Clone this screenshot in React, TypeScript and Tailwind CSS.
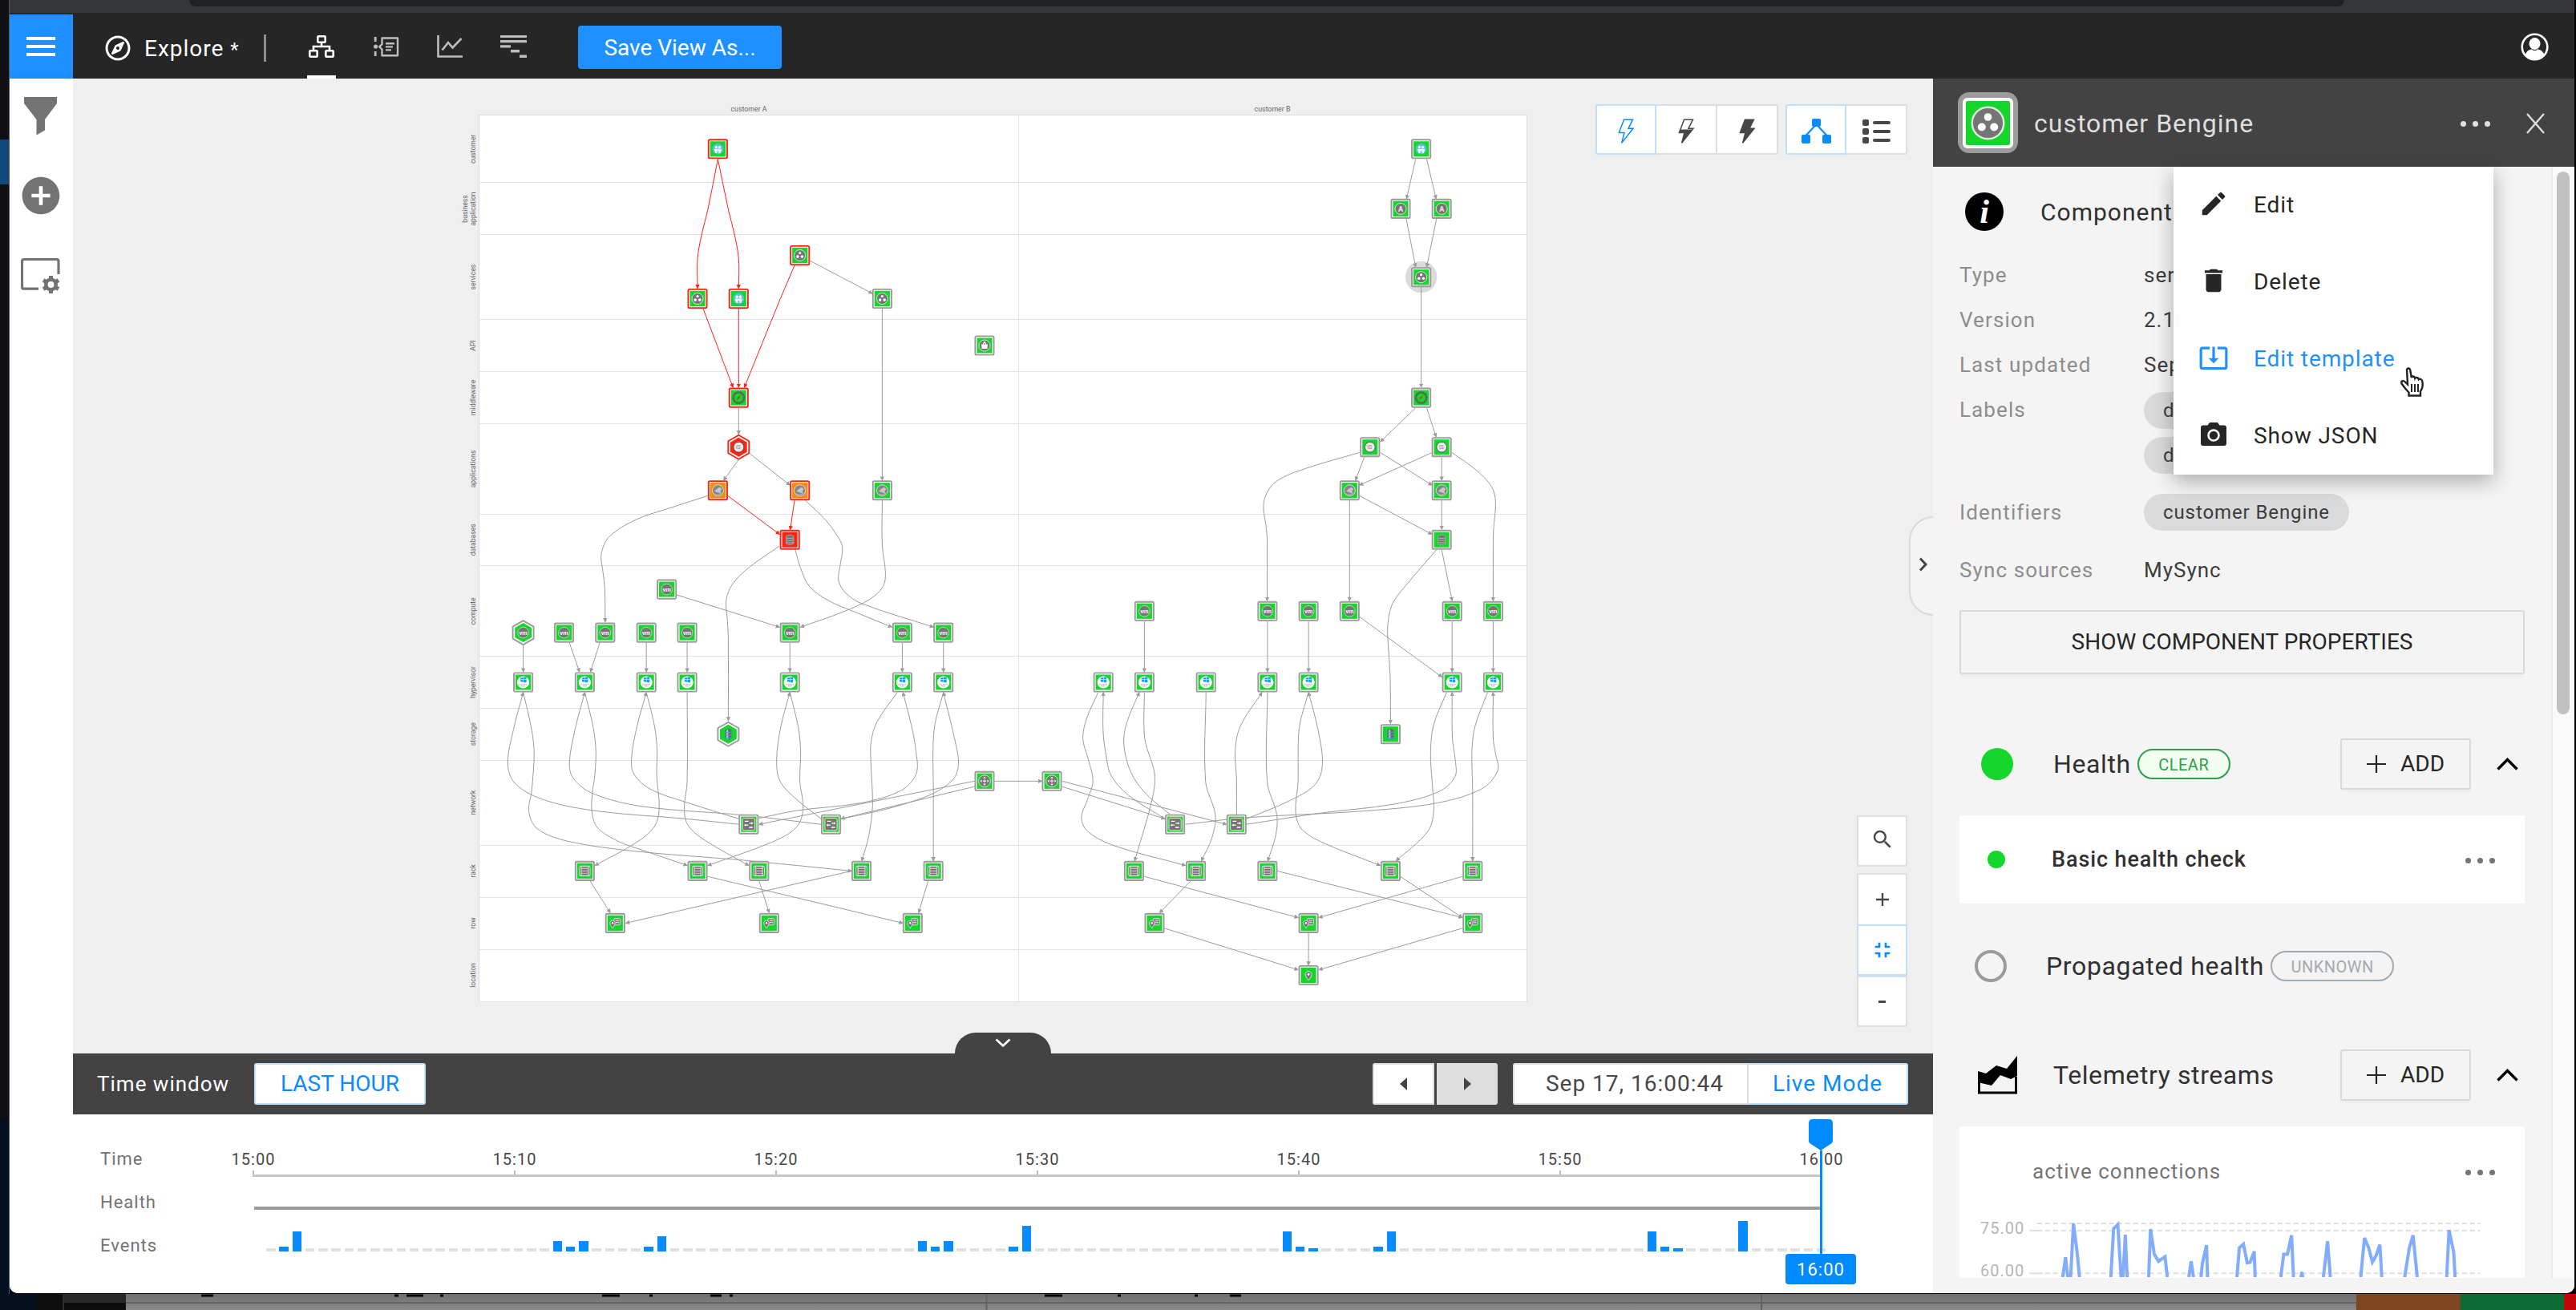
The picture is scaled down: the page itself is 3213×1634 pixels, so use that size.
import React from "react";
import { MdEdit, MdDelete, MdSystemUpdateAlt, MdFullscreenExit, MdSearch, MdAddCircle } from "react-icons/md";
import { FaRegCompass } from "react-icons/fa";

/* ---------- topology graph ---------- */

type Side = "A" | "B";
type Point = [number, number];
type Icon =
  | "person" | "group" | "bag" | "compass" | "disc" | "rabbit" | "db" | "vm"
  | "win" | "bluedb" | "router" | "switch" | "rack" | "row" | "pin" | "app";

const ORIGIN = { A: 570, B: 1260 };
const UNIT_X = { A: 0.44643, B: 0.43367 };
const UNIT_Y = 0.38265;
const LOWER = 680;
const UPPER = 110;

const RED = "#fb2414";
const GRAY = "#9b9b9b";
const GREEN = "#15d62b";
const ORANGE = "#ff8a00";

interface NodeDef {
  side: Side; base: number; x: number; y: number; icon: Icon;
  outline?: string; fill?: string; hex?: boolean;
}

const row = (side: Side, base: number, y: number, icon: Icon, xs: number[]): NodeDef[] =>
  xs.map((x) => ({ side, base, x, y, icon }));

const NODES: NodeDef[] = [
  { side: "A", base: UPPER, x: 729, y: 198, icon: "person", outline: RED },
  { side: "A", base: UPPER, x: 672, y: 686, icon: "group", outline: RED },
  { side: "A", base: UPPER, x: 787, y: 686, icon: "person", outline: RED },
  { side: "A", base: UPPER, x: 958, y: 545, icon: "group", outline: RED },
  { side: "A", base: UPPER, x: 1188, y: 686, icon: "group" },
  { side: "A", base: UPPER, x: 1474, y: 839, icon: "bag" },
  { side: "A", base: UPPER, x: 787, y: 1009, icon: "compass", outline: RED },
  { side: "A", base: UPPER, x: 787, y: 1170, icon: "disc", outline: RED, fill: RED, hex: true },
  { side: "A", base: UPPER, x: 729, y: 1311, icon: "rabbit", outline: RED, fill: ORANGE },
  { side: "A", base: UPPER, x: 958, y: 1311, icon: "rabbit", outline: RED, fill: ORANGE },
  { side: "A", base: UPPER, x: 1188, y: 1311, icon: "rabbit" },
  { side: "A", base: UPPER, x: 930, y: 1472, icon: "db", outline: RED, fill: RED },
  { side: "A", base: LOWER, x: 586, y: 144, icon: "vm" },
  { side: "A", base: LOWER, x: 185, y: 285, icon: "vm", hex: true },
  ...row("A", LOWER, 285, "vm", [299, 414, 529, 643, 930, 1244, 1359]),
  ...row("A", LOWER, 447, "win", [185, 357, 529, 643, 930, 1244, 1359]),
  { side: "A", base: LOWER, x: 758, y: 616, icon: "bluedb", hex: true },
  { side: "A", base: LOWER, x: 1474, y: 769, icon: "router" },
  ...row("A", LOWER, 910, "switch", [815, 1045]),
  ...row("A", LOWER, 1062, "rack", [357, 672, 844, 1130, 1331]),
  ...row("A", LOWER, 1232, "row", [442, 872, 1273]),
  { side: "B", base: UPPER, x: 1182, y: 198, icon: "person" },
  ...row("B", UPPER, 393, "app", [1123, 1241]),
  { side: "B", base: UPPER, x: 1182, y: 616, icon: "group" },
  { side: "B", base: UPPER, x: 1182, y: 1009, icon: "compass" },
  ...row("B", UPPER, 1170, "disc", [1035, 1241]),
  ...row("B", UPPER, 1311, "rabbit", [976, 1241]),
  { side: "B", base: UPPER, x: 1241, y: 1472, icon: "db" },
  ...row("B", LOWER, 215, "vm", [386, 740, 858, 976, 1271, 1389]),
  ...row("B", LOWER, 447, "win", [268, 386, 563, 740, 858, 1271, 1389]),
  { side: "B", base: LOWER, x: 1094, y: 616, icon: "bluedb" },
  { side: "B", base: LOWER, x: 120, y: 769, icon: "router" },
  ...row("B", LOWER, 910, "switch", [474, 651]),
  ...row("B", LOWER, 1062, "rack", [356, 534, 740, 1094, 1330]),
  ...row("B", LOWER, 1232, "row", [415, 858, 1330]),
  { side: "B", base: LOWER, x: 858, y: 1402, icon: "pin" },
];

interface EdgeGroup { side: Side; base: number; red?: boolean; edges: Point[][] }

const EDGES: EdgeGroup[] = [
  {
    side: "A", base: UPPER, red: true, edges: [
      [[729, 231], [700, 400], [685, 470], [672, 555], [672, 652]],
      [[729, 231], [759, 400], [774, 470], [787, 555], [787, 652]],
      [[688, 719], [771, 975]],
      [[787, 719], [787, 975]],
      [[943, 578], [902, 690], [803, 975]],
      [[757, 1329], [901, 1454]],
      [[943, 1344], [931, 1439]],
    ],
  },
  {
    side: "A", base: UPPER, edges: [
      [[987, 563], [1160, 669]],
      [[1188, 719], [1188, 1278]],
      [[787, 1042], [787, 1128]],
      [[787, 1211], [745, 1278]],
      [[817, 1190], [930, 1294]],
    ],
  },
  {
    side: "A", base: LOWER, edges: [
      [[701, -161], [600, -123], [500, -83], [425, -27], [403, 30], [407, 80], [413, 140], [414, 250]],
      [[973, -146], [1030, -82], [1068, -20], [1077, 10], [1070, 70], [1066, 115], [1085, 155], [1130, 190], [1331, 267]],
      [[1188, -146], [1188, 0], [1197, 90], [1190, 135], [1155, 175], [1080, 217], [960, 267]],
      [[901, 3], [811, 77], [768, 130], [752, 180], [755, 240], [758, 300], [758, 572]],
      [[945, 15], [960, 75], [985, 135], [1040, 182], [1110, 217], [1215, 267]],
      [[614, 162], [901, 267]],
      [[185, 326], [185, 413]],
      [[314, 318], [342, 413]],
      [[399, 318], [373, 413]],
      [[529, 318], [529, 413]],
      [[643, 318], [643, 413]],
      [[930, 318], [930, 413]],
      [[1244, 318], [1244, 413]],
      [[1359, 318], [1359, 413]],
      [[787, 910], [640, 892], [400, 868], [250, 833], [165, 780], [142, 715], [158, 600], [185, 480]],
      [[185, 480], [205, 580], [215, 660], [214, 730], [208, 805], [201, 870], [225, 925], [310, 965], [500, 998], [800, 1027], [1102, 1062]],
      [[1017, 910], [800, 880], [520, 852], [380, 810], [325, 760], [314, 710], [330, 600], [357, 480]],
      [[357, 480], [380, 590], [388, 670], [385, 750], [378, 810], [377, 870], [392, 920], [450, 965], [520, 995], [643, 1044]],
      [[787, 892], [640, 838], [540, 795], [494, 745], [488, 690], [503, 590], [529, 480]],
      [[529, 480], [552, 590], [559, 670], [558, 750], [565, 860], [550, 920], [500, 970], [386, 1044]],
      [[643, 480], [643, 770], [635, 860], [645, 912], [690, 960], [815, 1044]],
      [[1017, 892], [950, 830], [903, 770], [893, 700], [905, 590], [930, 480]],
      [[930, 480], [953, 590], [960, 670], [958, 770], [967, 860], [948, 920], [880, 968], [701, 1044]],
      [[1230, 480], [1173, 577], [1157, 640], [1156, 700], [1161, 850], [1150, 950], [1131, 1029]],
      [[844, 890], [950, 865], [1130, 840], [1240, 800], [1283, 745], [1282, 670], [1270, 590], [1246, 480]],
      [[1359, 480], [1336, 580], [1330, 660], [1331, 800], [1331, 1029]],
      [[1073, 892], [1200, 860], [1320, 815], [1385, 765], [1401, 715], [1392, 640], [1359, 480]],
      [[1446, 769], [844, 910]],
      [[1446, 787], [1073, 892]],
      [[372, 1095], [428, 1198]],
      [[1102, 1062], [472, 1232]],
      [[701, 1080], [1245, 1232]],
      [[844, 1095], [872, 1198]],
      [[1316, 1095], [1290, 1198]],
    ],
  },
  {
    side: "B", base: UPPER, edges: [
      [[1166, 231], [1140, 360]],
      [[1198, 231], [1225, 360]],
      [[1139, 426], [1166, 583]],
      [[1226, 426], [1198, 583]],
      [[1182, 648], [1182, 975]],
      [[1166, 1042], [1065, 1152]],
      [[1198, 1042], [1225, 1136]],
      [[1018, 1204], [993, 1278]],
      [[1241, 1204], [1241, 1278]],
      [[1065, 1188], [1213, 1294]],
      [[1213, 1188], [1005, 1294]],
      [[1005, 1329], [1213, 1454]],
      [[1241, 1344], [1241, 1438]],
    ],
  },
  {
    side: "B", base: LOWER, edges: [
      [[1005, -302], [850, -250], [765, -208], [734, -160], [729, -115], [735, -70], [739, -20], [739, 181]],
      [[976, -146], [976, 181]],
      [[1270, -302], [1340, -245], [1385, -190], [1396, -140], [1390, -50], [1389, 20], [1389, 181]],
      [[1226, 15], [1150, 115], [1100, 190], [1086, 260], [1087, 320], [1093, 430], [1094, 581]],
      [[1241, 15], [1271, 181]],
      [[386, 248], [386, 413]],
      [[740, 248], [740, 413]],
      [[858, 248], [858, 413]],
      [[1271, 248], [1271, 413]],
      [[1389, 248], [1389, 413]],
      [[1005, 234], [1242, 430]],
      [[-45, 769], [91, 769]],
      [[253, 480], [220, 565], [209, 630], [225, 700], [238, 770], [222, 830], [205, 890], [225, 935], [300, 980], [504, 1044]],
      [[445, 892], [340, 815], [290, 750], [275, 680], [267, 600], [268, 480]],
      [[460, 878], [390, 810], [347, 740], [327, 650], [335, 580], [371, 480]],
      [[386, 480], [387, 630], [415, 745], [408, 830], [358, 1029]],
      [[563, 480], [562, 770], [590, 880], [580, 955], [550, 1029]],
      [[651, 878], [651, 760], [647, 670], [662, 590], [724, 480]],
      [[740, 480], [739, 770], [767, 880], [763, 950], [741, 1029]],
      [[858, 480], [832, 590], [828, 700], [828, 770], [821, 870], [838, 925], [900, 970], [1064, 1044]],
      [[680, 892], [800, 835], [877, 780], [898, 715], [885, 600], [858, 480]],
      [[1255, 480], [1218, 585], [1209, 680], [1214, 780], [1218, 870], [1200, 935], [1110, 1029]],
      [[680, 910], [900, 872], [1100, 845], [1230, 805], [1279, 755], [1280, 700], [1272, 630], [1271, 480]],
      [[1373, 480], [1337, 590], [1328, 670], [1330, 800], [1330, 1029]],
      [[504, 910], [680, 888], [1000, 868], [1220, 842], [1355, 795], [1402, 735], [1396, 680], [1389, 630], [1389, 480]],
      [[149, 787], [445, 892]],
      [[149, 769], [622, 910]],
      [[386, 1080], [828, 1214]],
      [[519, 1095], [430, 1198]],
      [[768, 1062], [1300, 1214]],
      [[1122, 1080], [1300, 1214]],
      [[1300, 1080], [888, 1214]],
      [[444, 1249], [828, 1384]],
      [[858, 1265], [858, 1369]],
      [[1300, 1249], [888, 1384]],
    ],
  },
];

const project = (side: Side, base: number, x: number, y: number): Point => [
  ORIGIN[side] + x * UNIT_X[side],
  base + y * UNIT_Y,
];

/** Smooth path through all the points of an edge. */
function edgePath(points: Point[]): string {
  const f = (n: number) => n.toFixed(1);
  let d = `M${f(points[0][0])} ${f(points[0][1])}`;
  if (points.length === 2) return `${d}L${f(points[1][0])} ${f(points[1][1])}`;
  for (let i = 0; i < points.length - 1; i++) {
    const p0 = points[Math.max(i - 1, 0)];
    const p1 = points[i];
    const p2 = points[i + 1];
    const p3 = points[Math.min(i + 2, points.length - 1)];
    const len = Math.hypot(p2[0] - p1[0], p2[1] - p1[1]);
    const k1 = len / (Math.hypot(p2[0] - p0[0], p2[1] - p0[1]) || 1) / 3;
    const k2 = len / (Math.hypot(p3[0] - p1[0], p3[1] - p1[1]) || 1) / 3;
    d += `C${f(p1[0] + (p2[0] - p0[0]) * k1)} ${f(p1[1] + (p2[1] - p0[1]) * k1)} ${f(p2[0] - (p3[0] - p1[0]) * k2)} ${f(p2[1] - (p3[1] - p1[1]) * k2)} ${f(p2[0])} ${f(p2[1])}`;
  }
  return d;
}

const LANES: { label: string[]; y: number; line: number }[] = [
  { label: ["customer"], y: 185.8, line: 227.5 },
  { label: ["business", "application"], y: 260.5, line: 292.5 },
  { label: ["services"], y: 345.7, line: 398.5 },
  { label: ["API"], y: 431, line: 463.5 },
  { label: ["middleware"], y: 496, line: 528.5 },
  { label: ["applications"], y: 585, line: 641.5 },
  { label: ["databases"], y: 673.3, line: 705.5 },
  { label: ["compute"], y: 762.3, line: 818.5 },
  { label: ["hypervisor"], y: 851, line: 883.5 },
  { label: ["storage"], y: 915.7, line: 948.5 },
  { label: ["network"], y: 1001, line: 1054.5 },
  { label: ["rack"], y: 1086.4, line: 1119.5 },
  { label: ["row"], y: 1151.4, line: 1184.5 },
  { label: ["location"], y: 1216.5, line: 1249.5 },
];

function Glyph({ icon }: { icon: Icon }) {
  const ring = <circle r="7" fill="#757575" stroke="#cfeccf" strokeWidth="1" />;
  switch (icon) {
    case "person":
      return (
        <g>
          <circle r="6.8" fill="#62bde4" />
          <circle cx="-2.1" cy="-2.2" r="1.7" fill="#fff" />
          <circle cx="2.1" cy="-2.2" r="1.7" fill="#fff" />
          <path d="M-4.4 0H4.4V3H3.4V5.2H1V2.6H-1V5.2H-3.4V3H-4.4Z" fill="#eaf7fd" />
        </g>
      );
    case "group":
      return (
        <g>
          {ring}
          <circle cy="-3" r="1.6" fill="#fff" />
          <circle cx="-2.8" cy="1.6" r="1.8" fill="#fff" />
          <circle cx="2.8" cy="1.6" r="1.8" fill="#fff" />
        </g>
      );
    case "app":
      return (
        <g>
          {ring}
          <text y="3.2" textAnchor="middle" fontSize="9" fontWeight="700" fill="#e8e8e8">A</text>
        </g>
      );
    case "vm":
      return (
        <g>
          <circle r="6.8" fill="#757575" stroke="#a9dfaf" strokeWidth="1" />
          <text y="2.4" textAnchor="middle" fontSize="7.5" fontWeight="700" fill="#f4f4f4">vm</text>
        </g>
      );
    case "bag":
      return (
        <g>
          {ring}
          <path d="M-4 -1.5H4L3.3 4H-3.3Z" fill="#fff" />
          <path d="M-2 -1.5L0 -4.5L2 -1.5" fill="none" stroke="#fff" strokeWidth="1.2" />
        </g>
      );
    case "compass":
      return (
        <g>
          <circle r="6.7" fill="none" stroke="#56605b" strokeWidth="2.4" />
          <circle r="6.7" fill="none" stroke="#8b938e" strokeWidth="0.7" strokeDasharray="1.5 2" />
          <path d="M2.5 -4.5L-0.5 0.5L1 1Z" fill="#e8331c" />
          <path d="M-2.5 4.5L0.5 -0.5L-1 -1Z" fill="#a63a20" />
        </g>
      );
    case "disc":
      return (
        <g>
          <circle r="6.4" fill="#e9e9e9" stroke="#4d4d4d" strokeWidth="0.9" />
          <text x="-0.5" y="2.3" textAnchor="middle" fontSize="6.5" fill="#8a8a8a">IS</text>
        </g>
      );
    case "rabbit":
      return (
        <g>
          <circle r="7" fill="#868686" stroke="#d8d8d8" strokeWidth="1" />
          <path d="M-4.5 1L-1 -2L2 -4L5 -2L3 1L4 4L0 2.5Z" fill="#c9c9c9" />
          <path d="M-5 4Q0 7 5 3" stroke="#b5b5b5" fill="none" />
        </g>
      );
    case "db":
      return (
        <g>
          <path d="M-4.8 -5Q0 -7.4 4.8 -5V5Q0 7.4 -4.8 5Z" fill="#6f7672" stroke="#b5bdb7" strokeWidth="0.6" />
          <path d="M-4.8 -2.4Q0 -1 4.8 -2.4M-4.8 0.4Q0 1.8 4.8 0.4M-4.8 3.2Q0 4.6 4.8 3.2" stroke="#b8b8b8" fill="none" strokeWidth="0.9" />
        </g>
      );
    case "bluedb":
      return (
        <g>
          <path d="M-4 -5.5Q0 -7.6 4 -5.5V5.5Q0 7.6 -4 5.5Z" fill="#5b6973" />
          <path d="M-1.2 -5.4V6" stroke="#b9c3ca" strokeWidth="2.2" />
          <path d="M-4 -2.7Q0 -1.3 4 -2.7M-4 0.9Q0 2.3 4 0.9M-4 4.5Q0 5.9 4 4.5" fill="none" stroke="#4aa3dd" strokeWidth="1.1" />
        </g>
      );
    case "win":
      return (
        <g>
          <circle r="7.6" fill="#fff" />
          <path d="M-3.4 -5.6L-0.2 -6.1V-3.4H-3.4ZM0.3 -6.2L4 -6.8V-3.4H0.3ZM-3.4 -2.9H-0.2V-0.2L-3.4 -0.7ZM0.3 -2.9H4V0.5L0.3 -0.1Z" fill="#12a5ee" />
          <path d="M-5 2.8H5M-2.5 4.8H2.5" stroke="#9a9a9a" strokeWidth="0.9" strokeDasharray="1.6 0.5" />
        </g>
      );
    case "router":
      return (
        <g>
          <circle r="7.4" fill="#757575" stroke="#d5e8d6" strokeWidth="1" />
          <path d="M0 -5.8L1.8 -3.3H-1.8ZM0 5.8L1.8 3.3H-1.8ZM-5.8 0L-3.3 1.8V-1.8ZM5.8 0L3.3 1.8V-1.8Z" fill="#eee" />
          <path d="M0 -2V2M-2 0H2" stroke="#ddd" strokeWidth="1.4" />
        </g>
      );
    case "switch":
      return (
        <g>
          <rect x="-7.6" y="-7.6" width="15.2" height="15.2" rx="2" fill="#757575" stroke="#e3e3e3" strokeWidth="1" />
          <path d="M-4.8 -3.8H-0.2M0.8 -1.4H5.2M-5 1H-0.6M0.4 3.8H5" stroke="#fff" strokeWidth="1.3" />
          <path d="M-5.8 1L-3.6 -0.6V2.6ZM5.8 -1.4L3.6 -3V0.2Z" fill="#fff" />
        </g>
      );
    case "rack":
      return (
        <g>
          <rect x="-6.6" y="-6.2" width="13.2" height="12.4" rx="1.5" fill="#c9c9c9" stroke="#e6efe6" strokeWidth="0.8" />
          <path d="M-5.6 -5V5M5.6 -5V5" stroke="#6d6d6d" strokeWidth="1" />
          <path d="M-3.6 -4.4H3.6M-3.6 -1.5H3.6M-3.6 1.4H3.6M-3.6 4.3H3.6" stroke="#707070" strokeWidth="1.7" />
        </g>
      );
    case "row":
      return (
        <g>
          <rect x="-1.6" y="-6" width="8" height="8.4" rx="1.4" fill="#8a8a8a" stroke="#d4ead6" strokeWidth="0.8" />
          <path d="M0.8 -3.4H4.6M0.8 -1H4.6" stroke="#e2e2e2" strokeWidth="0.9" />
          <path d="M-3.2 6.4Q-7 1.6 -6.4 -0.8A3.3 3.3 0 0 1 0 -0.8Q0.4 1.6 -3.2 6.4Z" fill="#757575" stroke="#dcefde" strokeWidth="0.8" />
          <circle cx="-3.2" cy="-0.2" r="1.2" fill="#fff" />
        </g>
      );
    case "pin":
      return (
        <g>
          <path d="M0 6.2Q-4.6 0.8 -3.8 -2A3.9 3.9 0 0 1 3.8 -2Q4.6 0.8 0 6.2Z" fill="#757575" stroke="#d9efdb" strokeWidth="0.9" />
          <circle cy="-1.2" r="1.5" fill="#fff" />
        </g>
      );
  }
}

const hexPoints = (r: number) =>
  [-90, -30, 30, 90, 150, 210]
    .map((a) => `${(r * Math.cos((a * Math.PI) / 180)).toFixed(2)},${(r * Math.sin((a * Math.PI) / 180)).toFixed(2)}`)
    .join(" ");

function GraphNode({ node }: { node: NodeDef }) {
  const [x, y] = project(node.side, node.base, node.x, node.y);
  const outline = node.outline ?? GRAY;
  const fill = node.fill ?? GREEN;
  return (
    <g transform={`translate(${x.toFixed(1)} ${y.toFixed(1)})`}>
      {node.hex ? (
        <>
          <polygon points={hexPoints(15)} fill="#fff" stroke={outline} strokeWidth="1.9" strokeLinejoin="round" />
          <polygon points={hexPoints(12)} fill={fill} />
        </>
      ) : (
        <>
          <rect x="-11.6" y="-11.6" width="23.2" height="23.2" rx="1.6" fill="#fff" stroke={outline} strokeWidth="1.9" />
          <rect x="-9.7" y="-9.7" width="19.4" height="19.4" fill={fill} stroke="#dfe6df" strokeWidth="0.4" />
        </>
      )}
      <Glyph icon={node.icon} />
    </g>
  );
}

function Topology() {
  return (
    <svg className="block h-full w-full" viewBox="91 98 2320 1216" fontFamily="Roboto">
      <defs>
        <marker id="arrow-gray" markerUnits="userSpaceOnUse" markerWidth="7" markerHeight="6" refX="4.6" refY="2.7" orient="auto">
          <path d="M0 0L5.6 2.7L0 5.4Z" fill={GRAY} />
        </marker>
        <marker id="arrow-red" markerUnits="userSpaceOnUse" markerWidth="7" markerHeight="6" refX="4.6" refY="2.7" orient="auto">
          <path d="M0 0L5.6 2.7L0 5.4Z" fill={RED} />
        </marker>
      </defs>
      <rect x="597.5" y="143.5" width="1307" height="1106" fill="#fff" stroke="#dcdcdc" />
      {LANES.map((lane) => (
        <g key={lane.label[0]}>
          <path d={`M597 ${lane.line}H1905`} stroke="#e2e2e2" />
          {lane.label.map((t, i) => (
            <text
              key={t}
              transform={`translate(${593 - (lane.label.length - 1 - i) * 10} ${lane.y}) rotate(-90)`}
              textAnchor="middle"
              fontSize="8.6"
              fill="#666"
            >
              {t}
            </text>
          ))}
        </g>
      ))}
      <path d="M1270.5 143V1249" stroke="#e2e2e2" />
      <text x="934" y="139" textAnchor="middle" fontSize="8.8" fill="#666">customer A</text>
      <text x="1587" y="139" textAnchor="middle" fontSize="8.8" fill="#666">customer B</text>
      <circle cx="1772.6" cy="345.5" r="19.7" fill="#dadada" />
      {EDGES.map((g, gi) =>
        g.edges.map((pts, i) => (
          <path
            key={`${gi}-${i}`}
            d={edgePath(pts.map(([x, y]) => project(g.side, g.base, x, y)))}
            fill="none"
            stroke={g.red ? RED : GRAY}
            strokeWidth="1"
            markerEnd={g.red ? "url(#arrow-red)" : "url(#arrow-gray)"}
          />
        )),
      )}
      {NODES.map((n, i) => (
        <GraphNode key={i} node={n} />
      ))}
    </svg>
  );
}

/* ---------- shared bits ---------- */

function Dots({ className }: { className: string }) {
  return (
    <div className={`flex w-[37px] items-center justify-between ${className}`}>
      <span className="size-[7px] rounded-full bg-current" />
      <span className="size-[7px] rounded-full bg-current" />
      <span className="size-[7px] rounded-full bg-current" />
    </div>
  );
}

const Bolt = ({ kind }: { kind: "outline" | "half" | "full" }) => (
  <svg width="22" height="32" viewBox="0 0 22 32">
    <path
      d="M8.5 1.2H19.5L14 12.2H20L5.6 30.4L9 17.4H2.4Z"
      fill={kind === "full" ? "currentColor" : "none"}
      stroke="currentColor"
      strokeWidth="1.5"
    />
    {kind === "half" && <path d="M4 13.5H19.5L5.6 30.4L9 17.4H2.4Z" fill="currentColor" />}
  </svg>
);

/* ---------- top bar ---------- */

function TopBar() {
  return (
    <header className="flex h-[82px] shrink-0 bg-[#262626] text-[#bdbdbd]">
      <div className="mt-[2px] flex h-[80px] w-[79px] flex-col justify-center gap-[6px] bg-[#1e90ff] pl-[21px]">
        <span className="h-1 w-9 bg-white" />
        <span className="h-1 w-9 bg-white" />
        <span className="h-1 w-9 bg-white" />
      </div>
      <div className="ml-[40px] flex items-center text-white">
        <FaRegCompass size={32} className="mt-[6px]" />
        <span className="ml-[17px] mt-[7px] w-[126px] whitespace-nowrap text-[28px] tracking-[1px]">
          Explore <span className="text-[24px]">*</span>
        </span>
        <span className="ml-[23px] mt-[5px] h-[34px] w-[3px] bg-[#8e8e8e]" />
      </div>
      <div className="ml-[51px] flex">
        <div className="flex w-[36px] flex-col items-center justify-between text-white">
          <svg className="mt-[28px]" width="32" height="28" viewBox="0 0 32 28" fill="none" stroke="currentColor" strokeWidth="2.6">
            <rect x="11.3" y="1.3" width="9.4" height="7.4" rx="1" />
            <path d="M16 9V14M6 19V14H26V19" />
            <rect x="1.3" y="19.3" width="9.4" height="7.4" rx="1" />
            <rect x="21.3" y="19.3" width="9.4" height="7.4" rx="1" />
          </svg>
          <span className="h-1 w-full bg-white" />
        </div>
        <svg className="ml-[47px] mt-[30px]" width="32" height="25" viewBox="0 0 32 25" fill="none" stroke="currentColor" strokeWidth="2.4">
          <path d="M2.2 0V6M2.2 18V24" strokeWidth="2.8" />
          <circle cx="2.6" cy="12" r="2.6" fill="currentColor" stroke="none" />
          <path d="M10.5 1.5H30V23.3H10.5V15.5L7.2 12.4L10.5 9.2Z" strokeLinejoin="round" />
          <path d="M15 8.3H26M15 12.4H24M15 16.4H22" />
        </svg>
        <svg className="ml-[47px] mt-[28px]" width="32" height="29" viewBox="0 0 32 29" fill="none" stroke="currentColor" strokeWidth="2.6">
          <path d="M1.5 0V26.5H32" />
          <path d="M6.5 18.5L14 9L19.5 15.5L30.5 4" />
        </svg>
        <svg className="ml-[47px] mt-[28px]" width="33" height="29" viewBox="0 0 33 29" fill="currentColor">
          <path d="M0 0H33V3H0ZM0 6H33V9.3H0ZM0 12.3H13V15.5H0ZM13 18H24V21.5H13ZM24 24.5H33V28H24Z" />
        </svg>
      </div>
      <div className="ml-[64px] mt-4 flex h-[54px] w-[254px] items-center justify-center rounded bg-[#1e90ff] pt-[2px] text-[28px] text-white">
        Save View As...
      </div>
      <svg className="ml-auto mr-[32px] mt-[25px] text-white" width="35" height="35" viewBox="0 0 35 35">
        <circle cx="17.5" cy="17.5" r="15.8" fill="none" stroke="currentColor" strokeWidth="2.6" />
        <ellipse cx="17.5" cy="13.5" rx="7" ry="7.6" fill="currentColor" />
        <path d="M5.5 27.5Q7.5 21.5 13.5 20.5Q17.5 23.5 21.5 20.5Q27.5 21.5 29.5 27.5Q25 33.5 17.5 33.5Q10 33.5 5.5 27.5Z" fill="currentColor" />
      </svg>
    </header>
  );
}

/* ---------- left rail ---------- */

function Rail() {
  return (
    <nav className="flex w-[79px] shrink-0 flex-col items-center bg-white pr-[2px] text-[#737373] shadow-[2px_0_8px_rgba(0,0,0,0.08)]">
      <svg className="mt-[23px]" width="41" height="48" viewBox="0 0 41 48" fill="currentColor">
        <path d="M0 0H41V8L26 28V41.5L15.5 47.5V28L0 8Z" />
      </svg>
      <MdAddCircle size={56} className="mt-[47px]" />
      <svg className="mt-[50px]" width="49" height="45" viewBox="0 0 49 45">
        <path d="M22 38.2H4Q1.5 38.2 1.5 35.7V4Q1.5 1.5 4 1.5H44.5Q47 1.5 47 4V20" fill="none" stroke="currentColor" strokeWidth="3.2" />
        <g transform="translate(37.5 33)">
          <circle r="6.2" fill="none" stroke="currentColor" strokeWidth="4.6" />
          <path
            d="M0 -11V-7M0 11V7M-9.5 -5.5L-6 -3.5M9.5 5.5L6 3.5M-9.5 5.5L-6 3.5M9.5 -5.5L6 -3.5"
            stroke="currentColor"
            strokeWidth="5"
          />
        </g>
      </svg>
    </nav>
  );
}

/* ---------- canvas with overlay controls ---------- */

function Canvas() {
  return (
    <section className="relative h-[1216px] bg-[#efefef]">
      <Topology />
      <div className="absolute right-[32px] top-[32px] flex gap-[9px] text-[#474747]">
        <div className="flex">
          <div className="flex h-[63px] w-[76px] items-center justify-center rounded-l-[3px] border-2 border-[#bfe0fd] bg-white pt-1 text-[#0a8cff]">
            <Bolt kind="outline" />
          </div>
          <div className="flex h-[63px] w-[76px] items-center justify-center border-2 border-l-0 border-[#dcdfe1] bg-white pt-1">
            <Bolt kind="half" />
          </div>
          <div className="flex h-[63px] w-[76px] items-center justify-center rounded-r-[3px] border-2 border-l-0 border-[#dcdfe1] bg-white pt-1">
            <Bolt kind="full" />
          </div>
        </div>
        <div className="flex">
          <div className="flex h-[63px] w-[76px] items-center justify-center rounded-l-[3px] border-2 border-[#bfe0fd] bg-white pt-1 text-[#0a8cff]">
            <svg width="37" height="31" viewBox="0 0 37 31" fill="currentColor">
              <rect x="13" width="11" height="10" rx="2" />
              <rect y="20" width="11" height="11" rx="2" />
              <rect x="26" y="20" width="11" height="11" rx="2" />
              <path d="M5.5 21L18.5 7L31.5 21" fill="none" stroke="currentColor" strokeWidth="2.2" />
            </svg>
          </div>
          <div className="flex h-[63px] w-[76px] items-center justify-center rounded-r-[3px] border-2 border-l-0 border-[#dcdfe1] bg-white pt-1">
            <svg width="35" height="30" viewBox="0 0 35 30" fill="currentColor">
              <rect width="8" height="8" rx="2" />
              <rect y="11" width="8" height="8" rx="2" />
              <rect y="22" width="8" height="8" rx="2" />
              <rect x="13" y="2" width="22" height="4" rx="2" />
              <rect x="13" y="13" width="22" height="4" rx="2" />
              <rect x="13" y="24" width="22" height="4" rx="2" />
            </svg>
          </div>
        </div>
      </div>
      <div className="absolute bottom-[33px] right-[32px] flex w-[63px] flex-col text-[#474747]">
        <div className="mb-[8px] flex h-[64px] items-center justify-center rounded-[3px] border-2 border-[#dcdfe1] bg-white pb-1">
          <MdSearch size={30} />
        </div>
        <div className="flex h-[64px] items-center justify-center rounded-t-[3px] border-2 border-b-0 border-[#dcdfe1] bg-white">
          <svg width="16" height="16" viewBox="0 0 16 16" stroke="currentColor" strokeWidth="2.4"><path d="M0 8H16M8 0V16" /></svg>
        </div>
        <div className="flex h-[64px] items-center justify-center border-2 border-[#bfe0fd] bg-white text-[#0a8cff]">
          <MdFullscreenExit size={32} />
        </div>
        <div className="flex h-[64px] items-center justify-center rounded-b-[3px] border-2 border-[#dcdfe1] bg-white">
          <span className="h-[3px] w-[9px] bg-[#474747]" />
        </div>
      </div>
      <div className="absolute right-0 top-[546px] flex h-[124px] w-[30px] items-center justify-center rounded-l-[30px] border-2 border-r-0 border-[#dadada] bg-[#f4f4f4] pb-[5px] pl-1 text-[#444]">
        <svg width="12" height="18" viewBox="0 0 12 18" fill="none" stroke="currentColor" strokeWidth="3"><path d="M2 1.5L9 9L2 16.5" /></svg>
      </div>
      <div className="absolute bottom-0 left-[1100px] flex h-[26px] w-[120px] justify-center rounded-t-[28px] bg-[#434343] pt-[7px] text-white">
        <svg width="20" height="12" viewBox="0 0 20 12" fill="none" stroke="currentColor" strokeWidth="2.6"><path d="M1.5 1.5L10 9.5L18.5 1.5" /></svg>
      </div>
    </section>
  );
}

/* ---------- timeline ---------- */

const EVENT_HEIGHTS: Record<number, number> = {
  1: 6, 2: 25, 22: 13, 23: 6, 24: 13, 29: 6, 30: 19, 50: 13, 51: 6, 52: 13, 57: 6, 58: 32,
  78: 25, 79: 6, 80: 4, 85: 6, 86: 25, 106: 25, 107: 6, 108: 4, 113: 38,
};

function Timeline() {
  return (
    <section className="flex h-[299px] flex-col">
      <div className="flex h-[76px] items-center bg-[#434343] pl-[30px] pr-[31px] text-[28px]">
        <span className="w-[196px] text-[26px] tracking-[1px] text-white">Time window</span>
        <div className="flex h-[52px] w-[214px] items-center justify-center rounded-[3px] border-2 border-[#bfe0fd] bg-white text-[#0a8cff]">
          LAST HOUR
        </div>
        <div className="ml-auto flex h-[52px] w-[77px] items-center justify-center rounded-l-[3px] border-2 border-[#dcdfe1] bg-white text-[#444]">
          <svg width="9" height="16" viewBox="0 0 9 16" fill="currentColor"><path d="M9 0V16L0 8Z" /></svg>
        </div>
        <div className="ml-[3px] flex h-[52px] w-[76px] items-center justify-center rounded-r-[3px] bg-[#dedede] text-[#444]">
          <svg width="9" height="16" viewBox="0 0 9 16" fill="currentColor"><path d="M0 0V16L9 8Z" /></svg>
        </div>
        <div className="ml-[19px] flex h-[52px] w-[294px] items-center justify-center rounded-l-[3px] border-2 border-[#dcdfe1] bg-white pl-[10px] tracking-[1px] text-[#474747]">
          Sep 17, 16:00:44
        </div>
        <div className="flex h-[52px] w-[199px] items-center justify-center rounded-r-[3px] border-2 border-l-0 border-[#bfe0fd] bg-white tracking-[1px] text-[#0a8cff]">
          Live Mode
        </div>
      </div>
      <div className="relative flex grow bg-white pl-[34px] text-[22px] tracking-[1px] text-[#747474]">
        <div className="w-[164px] pt-[29px]">
          <div className="h-[54px] leading-[54px]">Time</div>
          <div className="h-[54px] leading-[54px]">Health</div>
          <div className="h-[54px] leading-[54px]">Events</div>
        </div>
        <div className="w-[2090px] pt-[44px]">
          <div className="flex text-[20px] leading-[24px] text-[#474747]">
            {["15:00", "15:10", "15:20", "15:30", "15:40", "15:50", "16:00"].map((t) => (
              <div key={t} className="flex w-[326px] shrink-0 flex-col">
                <span className="-ml-[1px] w-[56px] text-center">{t}</span>
                <span className="ml-[26px] mt-[2px] h-[5px] w-[1.5px] bg-[#bdbdbd]" />
              </div>
            ))}
          </div>
          <div className="ml-[26px] h-[2.5px] w-[1956px] bg-[#c6c6c6]" />
          <div className="ml-[28px] mt-[37px] h-[4.5px] w-[1954px] bg-[#9b9b9b]" />
          <div className="ml-[43px] mt-[9px] flex h-[42.5px] w-[1951px] items-end">
            {Array.from({ length: 120 }, (_, i) => (
              <div key={i} className="w-[16.26px] shrink-0">
                <div
                  className={EVENT_HEIGHTS[i] ? "w-[11.5px] bg-[#078bff]" : "w-[11.5px] bg-[#e0e0e0]"}
                  style={{ height: EVENT_HEIGHTS[i] ?? 4 }}
                />
              </div>
            ))}
          </div>
        </div>
        <div className="absolute left-[2136px] top-[6px] flex w-[88px] flex-col items-center">
          <svg width="30" height="39" viewBox="0 0 30 39" fill="#008aff">
            <path d="M5 0H25Q30 0 30 5V27Q30 29 28 30.5L15 39L2 30.5Q0 29 0 27V5Q0 0 5 0Z" />
          </svg>
          <span className="h-[130px] w-[3px] bg-[#008aff]" />
          <span className="-mt-px h-[38px] w-full rounded-[4px] bg-[#008aff] text-center leading-[39px] text-white">16:00</span>
        </div>
      </div>
    </section>
  );
}

/* ---------- component details panel ---------- */

function Field({ label, className, children }: { label: string; className: string; children: React.ReactNode }) {
  return (
    <div className={`flex items-start ${className}`}>
      <span className="w-[230px] shrink-0 text-[26px] leading-[56px] tracking-[1.1px] text-[#8d8d8d]">{label}</span>
      {children}
    </div>
  );
}

const Pill = ({ children }: { children: React.ReactNode }) => (
  <span className="flex h-[46px] items-center rounded-[23px] bg-[#dadada] px-[24px] text-[24px] tracking-[0.9px] text-[#3c3c3c]">
    {children}
  </span>
);

function AddButton() {
  return (
    <div className="flex h-[64px] w-[163px] items-center justify-center gap-[18px] rounded-[3px] border-2 border-[#d9d9d9] text-[28px] text-[#262626] shadow-[0_3px_0_rgba(0,0,0,0.02)]">
      <svg width="24" height="24" viewBox="0 0 24 24" stroke="currentColor" strokeWidth="2.2"><path d="M0 12H24M12 1V23" /></svg>
      ADD
    </div>
  );
}

const Chevron = () => (
  <svg className="ml-[32px]" width="27" height="16" viewBox="0 0 27 16" fill="none" stroke="#000" strokeWidth="3.4">
    <path d="M1.5 14.5L13.5 2.5L25.5 14.5" />
  </svg>
);

const CONNECTIONS =
  "M468 1421L474 1347L479 1421H485L491 1221L499 1330L504 1421M571 1421L577 1240L586 1225L593 1421H597L602 1263L606 1421M652 1421L656 1242L664 1335L673 1362L687 1345L692 1421M738 1421L743 1362L748 1421M764 1421L767 1370L776 1302L778 1421M841 1421L846 1312L855 1298L863 1368L869 1366L878 1325L880 1421M935 1421L941 1336H949L958 1265L962 1421M978 1421L980 1402L982 1421M1026 1421L1035 1287L1041 1421M1106 1421L1114 1275L1123 1312L1131 1365L1139 1340L1147 1300L1151 1421M1200 1421L1210 1312L1218 1265L1227 1421M1290 1421L1295 1245L1305 1328L1308 1421";

function MenuItem({ icon, label, active }: { icon: React.ReactNode; label: string; active?: boolean }) {
  return (
    <div className={`flex h-[96px] items-center text-[28px] tracking-[0.9px] ${active ? "text-[#1e90ff]" : "text-[#262626]"}`}>
      <span className="-mt-[5px] flex w-[100px] justify-center">{icon}</span>
      <span>{label}</span>
    </div>
  );
}

function ContextMenu() {
  return (
    <div className="absolute left-[300px] top-[110px] z-10 h-[384px] w-[399px] bg-white shadow-[0_8px_24px_rgba(0,0,0,0.3)]">
      <MenuItem icon={<MdEdit size={38} />} label="Edit" />
      <MenuItem icon={<MdDelete size={38} />} label="Delete" />
      <MenuItem icon={<MdSystemUpdateAlt size={38} />} label="Edit template" active />
      <MenuItem
        icon={
          <svg width="32" height="30" viewBox="0 0 32 30">
            <path d="M11 0H21L23.5 3.5H29Q32 3.5 32 6.5V26Q32 29 29 29H3Q0 29 0 26V6.5Q0 3.5 3 3.5H8.5Z" fill="currentColor" />
            <circle cx="16" cy="16" r="6.5" fill="none" stroke="#fff" strokeWidth="2.6" />
          </svg>
        }
        label="Show JSON"
      />
      <svg className="absolute left-[282px] top-[250px]" width="32" height="38" viewBox="0 0 32 38">
        <path
          d="M9 3.5Q9 1.5 11 1.5Q13 1.5 13.3 4L14.8 13Q15 11.5 17 11.5Q18.8 11.6 19.2 13.8Q20 12.5 21.8 13Q23.4 13.4 23.8 15.2Q25 14.3 26.6 15Q28.5 16 28.5 19Q29.5 25 26 30V35.5H11.5V31.5Q7 27 2.5 20.5Q1.6 18 3.5 17.2Q5.5 16.8 7 18.5L10 21.5Z"
          fill="#fff"
          stroke="#222"
          strokeWidth="2.4"
        />
        <path d="M15 21V31M19 21V31M23 21V31" stroke="#222" strokeWidth="2" />
      </svg>
    </div>
  );
}

function DetailsPanel() {
  return (
    <aside className="relative flex w-[800px] shrink-0 flex-col bg-[#f4f4f4]">
      <div className="flex h-[110px] shrink-0 items-center bg-[#434343] pl-[31px] text-[#dedede]">
        <div className="flex h-[76px] w-[75px] items-center justify-center rounded-[14px] bg-[#9b9b9b]">
          <div className="flex size-[63px] items-center justify-center rounded-[6px] border-4 border-white bg-[#15d62b]">
            <svg width="43" height="43" viewBox="0 0 43 43">
              <circle cx="21.5" cy="21.5" r="19.8" fill="#757575" stroke="#e2efe3" strokeWidth="2.4" />
              <circle cx="21.5" cy="14" r="4.8" fill="#fff" />
              <circle cx="13.8" cy="26.5" r="5" fill="#fff" />
              <circle cx="29.2" cy="26.5" r="5" fill="#fff" />
            </svg>
          </div>
        </div>
        <span className="ml-[20px] mt-[2px] w-[532px] text-[32px] tracking-[1px]">customer Bengine</span>
        <Dots className="mt-[2px] text-[#e0e0e0]" />
        <svg className="ml-[44px] mt-[2px]" width="25" height="26" viewBox="0 0 25 26" fill="none" stroke="currentColor" strokeWidth="2.4">
          <path d="M2 1L23 25M23 1L2 25" />
        </svg>
      </div>
      <ContextMenu />
      <div className="flex h-[1386px] overflow-hidden">
        <div className="w-[771px] shrink-0 px-[33px]">
          <div className="mt-[31px] flex h-[50px] items-center">
            <svg className="ml-[7px]" width="48" height="48" viewBox="0 0 48 48">
              <circle cx="24" cy="24" r="24" fill="#000" />
              <text x="24" y="38" textAnchor="middle" fontFamily="Liberation Serif" fontStyle="italic" fontWeight="700" fontSize="42" fill="#fff">i</text>
            </svg>
            <span className="ml-[46px] text-[30px] tracking-[1px] text-[#303030]">Component</span>
          </div>
          <Field label="Type" className="mt-[26px] h-[56px]">
            <span className="text-[26px] leading-[56px] tracking-[1px] text-[#3c3c3c]">service</span>
          </Field>
          <Field label="Version" className="h-[56px]">
            <span className="text-[26px] leading-[56px] tracking-[1px] text-[#3c3c3c]">2.1.0</span>
          </Field>
          <Field label="Last updated" className="h-[56px]">
            <span className="text-[26px] leading-[56px] tracking-[1px] text-[#3c3c3c]">Sep 17</span>
          </Field>
          <Field label="Labels" className="h-[128px]">
            <div className="flex flex-col items-start gap-[10px] pt-[6px]">
              <Pill>demo</Pill>
              <Pill>data</Pill>
            </div>
          </Field>
          <Field label="Identifiers" className="h-[72px]">
            <div className="pt-[5px]"><Pill>customer Bengine</Pill></div>
          </Field>
          <Field label="Sync sources" className="h-[78px]">
            <span className="text-[26px] leading-[56px] tracking-[1px] text-[#3c3c3c]">MySync</span>
          </Field>
          <div className="flex h-[80px] items-center justify-center rounded-[3px] border-2 border-[#d9d9d9] text-[28px] text-[#262626] shadow-[0_3px_0_rgba(0,0,0,0.02)]">
            SHOW COMPONENT PROPERTIES
          </div>

          <div className="mt-[80px] flex h-[64px] items-center">
            <span className="ml-[27px] size-[40px] rounded-full bg-[#15d62b]" />
            <span className="ml-[50px] text-[32px] tracking-[0.6px] text-[#303030]">Health</span>
            <span className="ml-[8px] flex h-[38px] w-[116px] items-center justify-center rounded-[19px] border-2 border-[#2f9e4a] bg-[#f0fff0] pt-[2px] text-[20px] tracking-[0.5px] text-[#2f9e4a]">
              CLEAR
            </span>
            <div className="ml-auto"><AddButton /></div>
            <Chevron />
            <span className="w-[8px]" />
          </div>
          <div className="mt-[32px] flex h-[110px] items-center rounded-[3px] bg-white">
            <span className="ml-[35px] size-[22px] rounded-full bg-[#15d62b]" />
            <span className="ml-[58px] text-[27px] font-medium tracking-[0.9px] text-[#303030]">Basic health check</span>
            <Dots className="ml-auto mr-[37px] mt-[2px] text-[#757575]" />
          </div>
          <div className="mt-[46px] flex h-[64px] items-center">
            <span className="ml-[19px] size-[40px] rounded-full border-4 border-[#9b9b9b]" />
            <span className="ml-[49px] text-[32px] tracking-[0.65px] text-[#303030]">Propagated health</span>
            <span className="ml-[8px] flex h-[38px] w-[154px] items-center justify-center rounded-[19px] border-2 border-[#a3a9b1] pt-[2px] text-[20px] tracking-[0.5px] text-[#a3a9b1]">
              UNKNOWN
            </span>
          </div>
          <div className="mt-[72px] flex h-[64px] items-center">
            <svg className="ml-[23px]" width="49" height="48" viewBox="0 0 49 48">
              <path d="M1.5 20V46H47.5V26" fill="none" stroke="#000" strokeWidth="3" />
              <path d="M0 19L10 22L23 12L36 16L49 0V25L41 29L28 24L17 37L0 33Z" fill="#000" />
            </svg>
            <span className="ml-[45px] text-[32px] tracking-[0.6px] text-[#303030]">Telemetry streams</span>
            <div className="ml-auto"><AddButton /></div>
            <Chevron />
            <span className="w-[8px]" />
          </div>
          <div className="mt-[32px] h-[260px] rounded-[3px] bg-white">
            <div className="flex h-[112px] items-center">
              <span className="ml-[91px] text-[26px] tracking-[1px] text-[#757575]">active connections</span>
              <Dots className="ml-auto mr-[37px] mt-[2px] text-[#757575]" />
            </div>
            <div className="flex">
              <div className="w-[90px] pl-[26px] text-[20px] leading-[53px] tracking-[1px] text-[#b5b5b5]">
                <div className="-mt-[11px]">75.00</div>
                <div>60.00</div>
              </div>
              <svg className="-ml-[90px] -mt-[4px]" width="705" height="80" viewBox="247 1182 1210 239" preserveAspectRatio="none" fill="none">
                <g stroke="#dedede" strokeWidth="2">
                  <path d="M413 1221H1362M413 1248H1362M413 1407H1362" strokeDasharray="6 4" vectorEffect="non-scaling-stroke" />
                  <path d="M397 1248H425M397 1407H425" vectorEffect="non-scaling-stroke" />
                </g>
                <path d={CONNECTIONS} stroke="#82adff" strokeWidth="4" vectorEffect="non-scaling-stroke" />
              </svg>
            </div>
          </div>
        </div>
        <div className="w-[29px] shrink-0 border-l-2 border-[#e8e8e8] bg-[#fafafa] pl-[5px] pt-[6px]">
          <div className="h-[677px] w-[16px] rounded-[8px] bg-[#c1c1c1]" />
        </div>
      </div>
    </aside>
  );
}

/* ---------- desktop behind the window ---------- */

function Desktop() {
  return (
    <div className="flex h-[20px] w-full">
      <div className="w-[45px] bg-[#06101f]" />
      <div className="w-[35px] border-r-2 border-[#2a2a2a] bg-[#0e0e0e]" />
      <div className="w-[77px] bg-[#0d0d0d]"><div className="h-[11px] bg-[#282828]" /></div>
      <svg width="2782" height="20" viewBox="157 1614 2782 20">
        <defs>
          <linearGradient id="sheet" x1="0" y1="0" x2="0" y2="1">
            <stop offset="0" stopColor="#6e6e6e" />
            <stop offset="1" stopColor="#898989" />
          </linearGradient>
        </defs>
        <rect x="157" y="1614" width="2782" height="20" fill="url(#sheet)" />
        <path d="M157 1625H2939" stroke="#636363" strokeWidth="2" />
        <path d="M1230.500 1614V1634M2197 1614V1634" stroke="#636363" strokeWidth="2" />
        <path
          d="M251 1616H266M492 1616H497M507 1616H528M549 1616H553M751 1616H773M810 1616H814M886 1616H900M910 1616H914M1303 1616H1325M1394 1616H1398M1490 1616H1494M1534 1616H1548"
          stroke="#050505"
          strokeWidth="3"
        />
      </svg>
      <div className="w-[130px] bg-[#7f4520]" />
      <div className="w-[129px] bg-[#0b6c33]" />
      <div className="w-[15px] bg-[#c20508]" />
    </div>
  );
}

export default function App() {
  return (
    <div className="h-[1634px] w-[3213px] overflow-hidden bg-black font-[Roboto,sans-serif] leading-normal">
      <div className="flex h-[1614px]">
        <div className="flex w-[12px] shrink-0 flex-col border-r border-[#55565a] bg-[#101014]">
          <div className="mt-[174px] h-[56px] bg-[#104a7a]" />
          <div className="mt-auto h-[218px] bg-[#04101f]" />
        </div>
        <div className="flex h-[1613px] w-[3199px] flex-col overflow-hidden rounded-b-[10px] bg-white">
          <div className="h-[16px] shrink-0 bg-[#35363a] pl-[224px]">
            <div className="h-[8px] w-[2688px] rounded-b-[10px] bg-[#202124]" />
          </div>
          <TopBar />
          <div className="flex grow">
            <Rail />
            <main className="w-[2320px] shrink-0">
              <Canvas />
              <Timeline />
            </main>
            <DetailsPanel />
          </div>
        </div>
      </div>
      <Desktop />
    </div>
  );
}
